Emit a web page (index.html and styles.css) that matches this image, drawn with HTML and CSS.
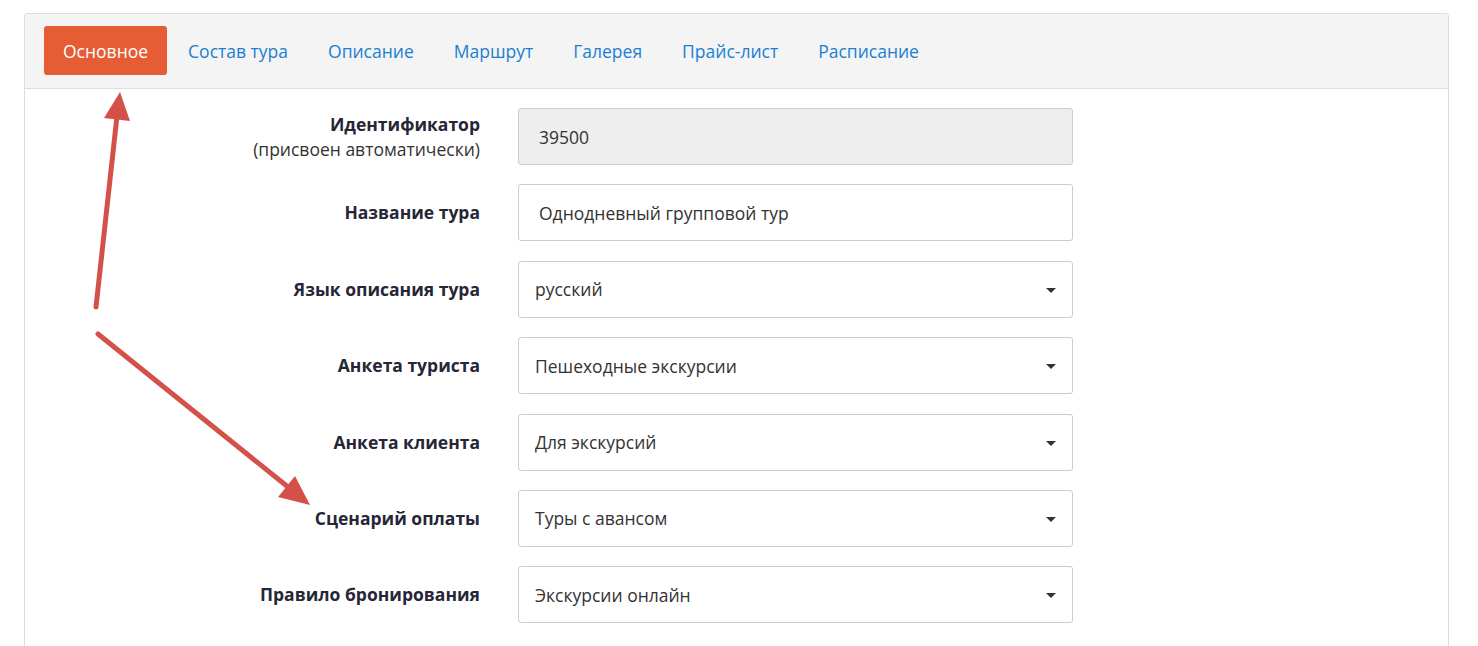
FILE: index.html
```html
<!DOCTYPE html>
<html lang="ru">
<head>
    <meta charset="UTF-8">
    <meta name="viewport" content="width=device-width, initial-scale=1.0">
    <title>Редактирование тура</title>
    <link rel="stylesheet" href="styles.css">
</head>
<body>
    <div class="panel">
        <div class="panel-head">
            <a class="tab active">Основное</a>
            <a class="tab">Состав тура</a>
            <a class="tab">Описание</a>
            <a class="tab">Маршрут</a>
            <a class="tab">Галерея</a>
            <a class="tab">Прайс-лист</a>
            <a class="tab">Расписание</a>
        </div>

        <div class="form">
            <div class="label">Идентификатор<br><span class="hint">(присвоен автоматически)</span></div>
            <div class="field readonly">39500</div>

            <div class="label">Название тура</div>
            <div class="field text">Однодневный групповой тур</div>

            <div class="label">Язык описания тура</div>
            <div class="field select">русский<span class="caret"></span></div>

            <div class="label">Анкета туриста</div>
            <div class="field select">Пешеходные экскурсии<span class="caret"></span></div>

            <div class="label">Анкета клиента</div>
            <div class="field select">Для экскурсий<span class="caret"></span></div>

            <div class="label">Сценарий оплаты</div>
            <div class="field select">Туры с авансом<span class="caret"></span></div>

            <div class="label">Правило бронирования</div>
            <div class="field select">Экскурсии онлайн<span class="caret"></span></div>
        </div>
    </div>

    <!-- стрелки-пометки поверх скриншота -->
    <svg class="arrows" width="1478" height="646" viewBox="0 0 1478 646">
        <line x1="96" y1="307" x2="117" y2="116" />
        <polygon points="120,92 130,121 104,118" />
        <line x1="98" y1="334" x2="288" y2="487" />
        <polygon points="310,505 278,497 295,476" />
    </svg>
</body>
</html>
```

FILE: styles.css
```css
body {
    margin: 0;
    padding: 13px 29px 0 24px;
    height: 646px;
    box-sizing: border-box;
    overflow: hidden;
    background: #fff;
    font-family: 'Open Sans', sans-serif;
    font-size: 17.5px;
    color: #333;
}

.panel {
    border: 1px solid #ddd;
    border-bottom: none;
    border-radius: 4px 4px 0 0;
    height: 633px;
    box-sizing: border-box;
    overflow: hidden;
}

.panel-head {
    display: flex;
    gap: 2px;
    padding: 12px 19px 13px;
    background: #f4f4f4;
    border-bottom: 1px solid #ddd;
    border-radius: 4px 4px 0 0;
}

.tab {
    display: block;
    height: 49px;
    line-height: 50px;
    padding: 0 19px;
    color: #1a7fd3;
    border-radius: 3px;
    cursor: pointer;
}

.tab.active {
    background: #e55c35;
    color: #fff;
}

.form {
    display: grid;
    grid-template-columns: 455px 555px;
    column-gap: 38px;
    row-gap: 19.4px;
    padding-top: 19px;
    align-items: center;
}

.label {
    text-align: right;
    font-weight: 700;
    line-height: 25px;
    color: #262636;
}

.label .hint {
    font-weight: 400;
    color: #333;
}

.field {
    position: relative;
    height: 57px;
    box-sizing: border-box;
    display: flex;
    align-items: center;
    padding: 0 16px;
    border: 1px solid #ccc;
    border-radius: 3px;
    background: #fff;
}

.field.readonly {
    background: #eee;
    padding-left: 20px;
}

.field.text {
    padding-left: 20px;
}

.caret {
    position: absolute;
    right: 16px;
    top: 26px;
    width: 0;
    height: 0;
    border-left: 5px solid transparent;
    border-right: 5px solid transparent;
    border-top: 5px solid #333;
}

.arrows {
    position: absolute;
    top: 0;
    left: 0;
    pointer-events: none;
}

.arrows line {
    stroke: #d4514a;
    stroke-width: 5;
    stroke-linecap: round;
}

.arrows polygon {
    fill: #d4514a;
}
```
